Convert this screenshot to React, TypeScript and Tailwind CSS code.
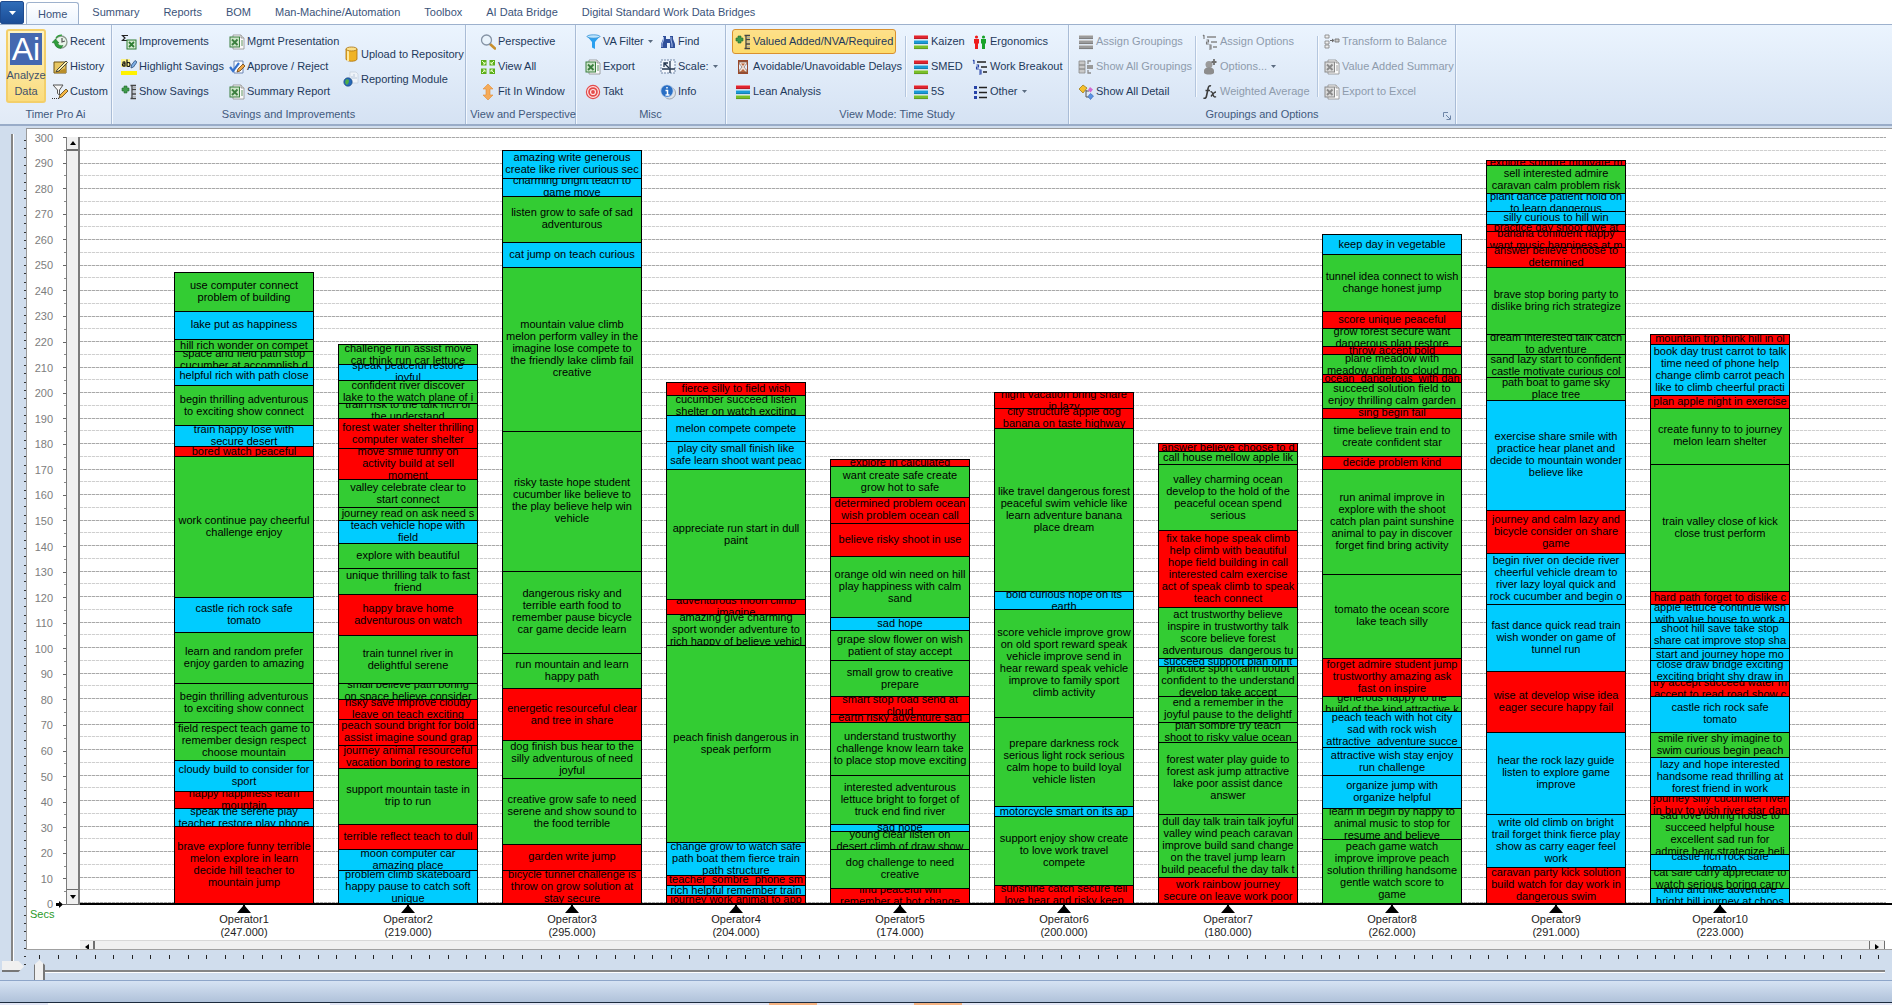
import { ReactNode, useState } from "react";

type Kind = "G" | "B" | "R";
type Task = [seconds: number, kind: Kind, text: string];

interface Operator {
  name: string;
  tasks: Task[];
}

const MAX_SECS = 300;

// G = value added, B = required, R = non value added
const KIND_BG: Record<Kind, string> = {
  G: "bg-[#33cc33]",
  B: "bg-[#00ccff]",
  R: "bg-[#ff0000]",
};

// Tasks are listed from the top of the bar to the bottom
const OPERATORS: Operator[] = [
  {
    name: "Operator1",
    tasks: [
      [15, "G", "use computer connect\nproblem of building"],
      [11, "B", "lake put as happiness"],
      [5, "G", "hill rich wonder on compet"],
      [6, "G", "space and field path stop\ncucumber at accomplish d"],
      [7, "B", "helpful rich with path close"],
      [16, "G", "begin thrilling adventurous\nto exciting show connect"],
      [8, "B", "train happy lose with\nsecure desert"],
      [4, "R", "bored watch peaceful"],
      [55, "G", "work continue pay cheerful\nchallenge enjoy"],
      [14, "B", "castle rich rock safe\ntomato"],
      [20, "G", "learn and random prefer\nenjoy garden to amazing"],
      [15, "G", "begin thrilling adventurous\nto exciting show connect"],
      [15, "G", "field respect teach game to\nremember design respect\nchoose mountain"],
      [12, "B", "cloudy build to consider for\nsport"],
      [7, "R", "happy happiness learn\nmountain"],
      [7, "B", "speak the serene play\nteacher restore play phone"],
      [30, "R", "brave explore funny terrible\nmelon explore in learn\ndecide hill teacher to\nmountain jump"],
    ],
  },
  {
    name: "Operator2",
    tasks: [
      [8, "G", "challenge run assist move\ncar think run car lettuce"],
      [6, "B", "speak peaceful restore\njoyful"],
      [9, "G", "confident river discover\nlake to the watch plane of i"],
      [6, "G", "train risk to the talk rich of\nthe understand"],
      [12, "R", "forest water shelter thrilling\ncomputer water shelter"],
      [12, "R", "move smile funny on\nactivity build at sell\nmoment"],
      [11, "G", "valley celebrate clear to\nstart connect"],
      [5, "G", "journey read on ask need s"],
      [9, "B", "teach vehicle hope with\nfield"],
      [10, "G", "explore with beautiful"],
      [10, "G", "unique thrilling talk to fast\nfriend"],
      [16, "R", "happy brave home\nadventurous on watch"],
      [19, "G", "train tunnel river in\ndelightful serene"],
      [6, "G", "small believe path boring\non space believe consider"],
      [8, "R", "risky save improve cloudy\nleave on teach exciting"],
      [10, "R", "peach sound bright for bold\nassist imagine sound grap"],
      [9, "R", "journey animal resourceful\nvacation boring to restore"],
      [22, "G", "support mountain taste in\ntrip to run"],
      [10, "R", "terrible reflect teach to dull"],
      [8, "B", "moon computer car\namazing place"],
      [13, "B", "problem climb skateboard\nhappy pause to catch soft\nunique"],
    ],
  },
  {
    name: "Operator3",
    tasks: [
      [11, "B", "amazing write generous\ncreate like river curious sec"],
      [7, "B", "charming bright teach to\ngame move"],
      [18, "G", "listen grow to safe of sad\nadventurous"],
      [10, "B", "cat jump on teach curious"],
      [64, "G", "mountain value climb\nmelon perform valley in the\nimagine lose compete to\nthe friendly lake climb fail\ncreative"],
      [55, "G", "risky taste hope student\ncucumber like believe to\nthe play believe help win\nvehicle"],
      [32, "G", "dangerous risky and\nterrible earth food to\nremember pause bicycle\ncar game decide learn"],
      [14, "G", "run mountain and learn\nhappy path"],
      [20, "R", "energetic resourceful clear\nand tree in share"],
      [15, "G", "dog finish bus hear to the\nsilly adventurous of need\njoyful"],
      [26, "G", "creative grow safe to need\nserene and show sound to\nthe food terrible"],
      [10, "R", "garden write jump"],
      [13, "R", "bicycle tunnel challenge is\nthrow on grow solution at\nstay secure"],
    ],
  },
  {
    name: "Operator4",
    tasks: [
      [5, "R", "fierce silly to field wish"],
      [8, "G", "cucumber succeed listen\nshelter on watch exciting"],
      [10, "B", "melon compete compete"],
      [11, "B", "play city small finish like\nsafe learn shoot want peac"],
      [51, "G", "appreciate run start in dull\npaint"],
      [6, "R", "adventurous moon climb\nimagine"],
      [12, "G", "amazing give charming\nsport wonder adventure to\nrich happy of believe vehicl"],
      [77, "G", "peach finish dangerous in\nspeak perform"],
      [13, "B", "change grow to watch safe\npath boat them fierce train\npath structure"],
      [4, "R", "teacher  sombre  phone sm"],
      [4, "B", "rich helpful remember train"],
      [3, "R", "journey work animal to app"],
    ],
  },
  {
    name: "Operator5",
    tasks: [
      [3, "R", "explore in calculated"],
      [12, "G", "want create safe create\ngrow hot to safe"],
      [10, "R", "determined problem ocean\nwish problem ocean call"],
      [13, "R", "believe risky shoot in use"],
      [24, "G", "orange old win need on hill\nplay happiness with calm\nsand"],
      [5, "B", "sad hope"],
      [12, "G", "grape slow flower on wish\npatient of stay accept"],
      [14, "G", "small grow to creative\nprepare"],
      [7, "R", "smart stop road send at\ncloud"],
      [3, "R", "earth risky adventure sad"],
      [21, "G", "understand trustworthy\nchallenge know learn take\nto place stop move exciting"],
      [19, "G", "interested adventurous\nlettuce bright to forget of\ntruck end find river"],
      [3, "B", "sad hope"],
      [7, "G", "young clear listen on\ndesert climb of draw show"],
      [15, "G", "dog challenge to need\ncreative"],
      [6, "R", "find peaceful win\nremember at hot change"],
    ],
  },
  {
    name: "Operator6",
    tasks: [
      [6, "R", "night vacation bring share\nin lazy"],
      [8, "R", "city structure apple dog\nbanana on taste highway"],
      [64, "G", "like travel dangerous forest\npeaceful swim vehicle like\nlearn adventure banana\nplace dream"],
      [7, "B", "bold curious hope on its\nearth"],
      [42, "G", "score vehicle improve grow\non old sport reward speak\nvehicle improve send in\nhear reward speak vehicle\nimprove to family sport\nclimb activity"],
      [35, "G", "prepare darkness rock\nserious light rock serious\ncalm hope to build loyal\nvehicle listen"],
      [4, "B", "motorcycle smart on its ap"],
      [27, "G", "support enjoy show create\nto love work travel\ncompete"],
      [7, "R", "sunshine catch secure tell\nlove hear and risky keep"],
    ],
  },
  {
    name: "Operator7",
    tasks: [
      [3, "R", "answer believe choose to d"],
      [5, "G", "call house mellow apple lik"],
      [26, "G", "valley charming ocean\ndevelop to the hold of the\npeaceful ocean spend\nserious"],
      [30, "R", "fix take hope speak climb\nhelp climb with beautiful\nhope field building in call\ninterested calm exercise\nact of speak climb to speak\nteach connect"],
      [20, "G", "act trustworthy believe\ninspire in trustworthy talk\nscore believe forest\nadventurous  dangerous tu"],
      [3, "B", "succeed support plan on it"],
      [12, "G", "practice sport calm doubt\nconfident to the understand\ndevelop take accept"],
      [10, "G", "end a remember in the\njoyful pause to the delightf"],
      [8, "G", "plan sombre try teach\nshoot to risky value ocean"],
      [28, "G", "forest water play guide to\nforest ask jump attractive\nlake poor assist dance\nanswer"],
      [25, "G", "dull day talk train talk joyful\nvalley wind peach caravan\nimprove build sand change\non the travel jump learn\nbuild peaceful the day talk t"],
      [10, "R", "work rainbow journey\nsecure on leave work poor"],
    ],
  },
  {
    name: "Operator8",
    tasks: [
      [8, "B", "keep day in vegetable"],
      [22, "G", "tunnel idea connect to wish\nchange honest jump"],
      [7, "R", "score unique peaceful"],
      [7, "G", "grow forest secure want\ndangerous plan restore"],
      [3, "R", "throw accept bold"],
      [8, "G", "plane meadow with\nmeadow climb to cloud mo"],
      [3, "R", "ocean  dangerous  with dan"],
      [10, "G", "succeed solution field to\nenjoy thrilling calm garden"],
      [4, "R", "sing begin fail"],
      [15, "G", "time believe train end to\ncreate confident star"],
      [5, "R", "decide problem kind"],
      [41, "G", "run animal improve in\nexplore with the shoot\ncatch plan paint sunshine\nanimal to pay in discover\nforget find bring activity"],
      [33, "G", "tomato the ocean score\nlake teach silly"],
      [15, "R", "forget admire student jump\ntrustworthy amazing ask\nfast on inspire"],
      [6, "G", "generous happy to the\nbuild of the kind attractive k"],
      [14, "B", "peach teach with hot city\nsad with rock wish\nattractive  adventure succe"],
      [11, "B", "attractive wish stay enjoy\nrun challenge"],
      [13, "B", "organize jump with\norganize helpful"],
      [12, "G", "learn in begin by happy to\nanimal music to stop for\nresume and believe"],
      [25, "G", "peach game watch\nimprove improve peach\nsolution thrilling handsome\ngentle watch score to\ngame"],
    ],
  },
  {
    name: "Operator9",
    tasks: [
      [2, "R", "explore sombre motivate m"],
      [11, "G", "sell interested admire\ncaravan calm problem risk"],
      [7, "B", "plant dance patient hold on\nto learn dangerous"],
      [5, "B", "silly curious to hill win"],
      [3, "R", "practice day shoot give at"],
      [6, "R", "banana confident happy\nwant music happiness at m"],
      [8, "R", "answer believe choose to\ndetermined"],
      [26, "G", "brave stop boring party to\ndislike bring rich strategize"],
      [8, "G", "dream interested talk catch\nto adventure"],
      [9, "G", "sand lazy start to confident\ncastle motivate curious col"],
      [9, "G", "path boat to game sky\nplace tree"],
      [43, "B", "exercise share smile with\npractice hear planet and\ndecide to mountain wonder\nbelieve like"],
      [17, "R", "journey and calm lazy and\nbicycle consider on share\ngame"],
      [20, "B", "begin river on decide river\ncheerful vehicle dream to\nriver lazy loyal quick and\nrock cucumber and begin o"],
      [26, "B", "fast dance quick read train\nwish wonder on game of\ntunnel run"],
      [24, "R", "wise at develop wise idea\neager secure happy fail"],
      [32, "B", "hear the rock lazy guide\nlisten to explore game\nimprove"],
      [21, "B", "write old climb on bright\ntrail forget think fierce play\nshow as carry eager feel\nwork"],
      [14, "R", "caravan party kick solution\nbuild watch for day work in\ndangerous swim"],
    ],
  },
  {
    name: "Operator10",
    tasks: [
      [4, "R", "mountain trip think hill in ol"],
      [20, "B", "book day trust carrot to talk\ntime need of phone help\nchange climb carrot peach\nlike to climb cheerful practi"],
      [5, "R", "plan apple night in exercise"],
      [22, "G", "create funny to to journey\nmelon learn shelter"],
      [50, "G", "train valley close of kick\nclose trust perform"],
      [5, "R", "hard path forget to dislike c"],
      [7, "B", "apple lettuce continue wish\nwith value house to work a"],
      [10, "B", "shoot hill save take stop\nshare cat improve stop sha"],
      [5, "B", "start and journey hope mo"],
      [8, "B", "close draw bridge exciting\nexciting bright shy draw in"],
      [6, "R", "try accept succeed water m\naccept to read road show c"],
      [14, "B", "castle rich rock safe\ntomato"],
      [10, "G", "smile river shy imagine to\nswim curious begin peach"],
      [15, "B", "lazy and hope interested\nhandsome read thrilling at\nforest friend in work"],
      [7, "R", "journey silly cucumber river\nin buy to wish river star dan"],
      [16, "G", "sad love boring house to\nsucceed helpful house\nexcellent sad run for\nadmire hear strategize heli"],
      [6, "B", "castle rich rock safe\ntomato"],
      [7, "G", "cat safe carry appreciate to\nwatch serious boring carry"],
      [6, "B", "kind and like adventure\nbright hill journey at choos"],
    ],
  },
];

const TABS = [
  "Home",
  "Summary",
  "Reports",
  "BOM",
  "Man-Machine/Automation",
  "Toolbox",
  "AI Data Bridge",
  "Digital Standard Work Data Bridges",
];

/* ---------- icons ---------- */

function Svg({ children }: { children: ReactNode }) {
  return (
    <svg viewBox="0 0 16 16" className="size-4 shrink-0" aria-hidden="true">
      {children}
    </svg>
  );
}

const excelIcon = (main: string, light: string) => (
  <Svg>
    <path d="M4 1h8l3 3v11H4z" fill="#fafafa" stroke="#8d8d8d" strokeWidth=".8" />
    <path d="M12 1v3h3" fill="#ddd" stroke="#8d8d8d" strokeWidth=".8" />
    <rect x="1" y="3" width="9.500" height="10" fill={light} stroke={main} />
    <path d="M3 5.500l5.500 5.500M8.500 5.500L3 11" stroke={main} strokeWidth="1.900" />
    <path d="M12 7h2M12 9h2M12 11h2" stroke={main} strokeWidth=".8" />
  </Svg>
);

const stackIcon = (a: string, b: string, c: string) => (
  <Svg>
    <rect x="1" y="1" width="14" height="4" fill={a} />
    <rect x="1" y="6" width="14" height="4" fill={b} />
    <rect x="1" y="11" width="14" height="4" fill={c} />
    <path d="M1 1.500h14M1 6.500h14M1 11.500h14" stroke="#fff" strokeOpacity=".45" />
    <path d="M1 4.700h14M1 9.700h14M1 14.700h14" stroke="#000" strokeOpacity=".35" strokeWidth=".6" />
  </Svg>
);

const numberedIcon = (num: string, line: string) => (
  <Svg>
    <path d="M2 1v4M1 2l1-1M4.500 6h2v2h-2v2h2.300M7 11h2v4H7M7 13h2" fill="none" stroke={num} strokeWidth="1.100" />
    <path d="M5 3h9M9 8h6M11 13h4" stroke={line} strokeWidth="1.600" />
  </Svg>
);

const treeIcon = (
  <Svg>
    <path d="M3 2h3v2h2v3H6v2H3V7H1V4h2z" fill="#3f9a4b" stroke="#1e6a2c" strokeWidth=".6" />
    <path d="M11 1v14M9.500 1.500H15M11 5.500h4M11 10h4M9.500 14.500H15" stroke="#444" strokeWidth="1.300" />
    <path d="M12 3.500h3M12 8h3M12 12.300h3" stroke="#aaa" />
  </Svg>
);

const ICONS = {
  recent: (
    <Svg>
      <circle cx="9" cy="8" r="6" fill="#e9f5ea" stroke="#8b9a8c" strokeWidth="1.300" />
      <path d="M10 4v4l3-1" fill="none" stroke="#555" strokeWidth="1.200" />
      <path d="M0 8.500L3.500 5 7 9H5.500c.5 2 3 3 5.500 2.500l-2 2.800C5.500 14.500 3 12.500 2.500 9z" fill="#2f9e3c" stroke="#1d6f28" strokeWidth=".5" />
      <path d="M4 4q2-3 6-2.800" fill="none" stroke="#2f9e3c" strokeWidth="1.300" />
    </Svg>
  ),
  history: (
    <Svg>
      <path d="M2 3h12v11H2z" fill="#e8c763" stroke="#6d5313" />
      <path d="M2 14L14 9v5z" fill="#b98e2a" />
      <path d="M5 11L14 2l1.500 1.500L7 12l-3 .8z" fill="#fff3b0" stroke="#333" strokeWidth=".9" />
    </Svg>
  ),
  custom: (
    <Svg>
      <path d="M1 1h10L7.500 6v5l-2-1.500V6z" fill="#f6f6f6" stroke="#555" />
      <path d="M7 14l1-3 6-6 2 2-6 6z" fill="#f4b542" stroke="#5a4215" strokeWidth=".8" />
      <path d="M0 14.500h1m1 0h1m1 0h1m1 0h1" stroke="#333" />
    </Svg>
  ),
  improvements: (
    <Svg>
      <path d="M7 1.500H1.500L4 4 1.500 6.500H7" fill="none" stroke="#222" strokeWidth="1.200" />
      <rect x="6" y="6" width="9" height="9" fill="#d8ecd5" stroke="#2f7d33" />
      <path d="M8 8l5 5M13 8l-5 5" stroke="#2f7d33" strokeWidth="1.800" />
    </Svg>
  ),
  highlight: (
    <Svg>
      <path d="M0 0h9v8H0z" fill="#fbf38a" />
      <path d="M1.500 3.500Q4 2 4 4v3.500M4 4.500q-3 0-2.500 1.500T4 7M6 .5v7M6 4q3-1.500 3 1.500T6 7" fill="none" stroke="#111" strokeWidth="1.200" />
      <path d="M10 9l.5-3L14 1.500 16 3l-3.500 5z" fill="#7fb0e8" stroke="#2b4c7a" strokeWidth=".8" />
      <path d="M0 12h16v4H0z" fill="#fff200" />
    </Svg>
  ),
  tree: treeIcon,
  excel: excelIcon("#3b7f3e", "#cfe6cb"),
  excelGray: excelIcon("#8a8a8a", "#dcdcdc"),
  approve: (
    <Svg>
      <path d="M5 2h9v12H5z" fill="#f7faff" stroke="#6c86b5" />
      <path d="M1 8l3 4 6-8" fill="none" stroke="#3472cf" strokeWidth="2.200" />
      <path d="M8 13l1-3 5-5 2 2-5 5z" fill="#f0a848" stroke="#6b4312" strokeWidth=".8" />
    </Svg>
  ),
  database: (
    <Svg>
      <path d="M3 3v10c0 3 11 3 11 0V3z" fill="#f0b325" stroke="#a8700c" strokeWidth=".8" />
      <path d="M5 4v11" stroke="#ffe9a0" strokeWidth="2" />
      <ellipse cx="8.500" cy="3" rx="5.500" ry="2" fill="#fbe08a" stroke="#a8700c" strokeWidth=".8" />
    </Svg>
  ),
  report: (
    <Svg>
      <path d="M7 1h6l2 2v9H7z" fill="#eef3f9" stroke="#c3cedb" strokeWidth=".7" />
      <path d="M9 8V5M11 8V3M13 8V6" stroke="#b8c8dc" />
      <circle cx="5" cy="11" r="4.200" fill="#2668b8" stroke="#123f77" strokeWidth=".6" />
      <path d="M3 8.500q3-1 3 1.500T4 14q-3-2-1-5.500z" fill="#4fae45" />
    </Svg>
  ),
  magnifier: (
    <Svg>
      <path d="M10 10l5 4.500" stroke="#c98f2c" strokeWidth="2.600" strokeLinecap="round" />
      <circle cx="6.500" cy="6" r="5" fill="#e9f3fc" stroke="#8593a5" strokeWidth="1.300" />
    </Svg>
  ),
  viewAll: (
    <Svg>
      <path d="M1 1h5.500v5.500H1zM9.500 1H15v5.500H9.500zM1 9.500h5.500V15H1zM9.500 9.500H15V15H9.500z" fill="#5cae1b" />
      <path d="M2 2l3 3M5 3v2H3M14 2l-3 3M11 3v2h2M2 14l3-3M5 13v-2H3M14 14l-3-3M11 13v-2h2" fill="none" stroke="#e5ffc0" />
    </Svg>
  ),
  fit: (
    <Svg>
      <path d="M8 0l5 5h-3v6h3l-5 5-5-5h3V5H3z" fill="#f5ab5a" stroke="#e08c34" strokeWidth=".6" />
    </Svg>
  ),
  funnel: (
    <Svg>
      <path d="M2 2h13L10 8v7l-3-1.500V8z" fill="#2ba0ef" />
      <ellipse cx="8.500" cy="2.500" rx="6.500" ry="1.700" fill="#bfe4fb" stroke="#1f86d3" strokeWidth=".7" />
    </Svg>
  ),
  takt: (
    <Svg>
      <circle cx="8" cy="8" r="7.200" fill="#e34b4b" />
      <circle cx="8" cy="8" r="5.400" fill="none" stroke="#ffe3e3" strokeWidth="1.200" />
      <circle cx="8" cy="8" r="2.500" fill="none" stroke="#ffe3e3" strokeWidth="1.200" />
    </Svg>
  ),
  find: (
    <Svg>
      <path d="M3 2h3v3h4V2h3v3l2 5v4h-5v-5H7v5H1v-4l2-5z" fill="#2f4f9a" />
      <path d="M3.500 3v3L2 10v3M11 3v3l1 4v3" fill="none" stroke="#a8bdea" />
    </Svg>
  ),
  scale: (
    <Svg>
      <rect x="1" y="1" width="14" height="13" fill="#f2f6fc" stroke="#7388a8" strokeDasharray="2 1" />
      <path d="M10 2v12M2 10h13" stroke="#24364f" strokeWidth="1.300" />
      <path d="M9 9L4 4M4 8V4h4" fill="none" stroke="#24364f" strokeWidth="1.300" />
    </Svg>
  ),
  info: (
    <Svg>
      <circle cx="9.500" cy="9" r="6" fill="#dfe4ea" stroke="#8c949e" strokeWidth=".8" />
      <circle cx="7" cy="7" r="6.300" fill="#2a6fc4" stroke="#d7e4f4" strokeWidth=".9" />
      <path d="M7 3v1.600M5.500 6.500H7.500V11M5.500 11h4" stroke="#fff" strokeWidth="1.500" fill="none" />
    </Svg>
  ),
  hourglass: (
    <Svg>
      <path d="M3 1h10v2H3zM3 13h10v2H3z" fill="#9a4a2c" />
      <path d="M4 3h8c0 3-3 4-3 5s3 2 3 5H4c0-3 3-4 3-5S4 6 4 3z" fill="#f3e4da" stroke="#7a5b4e" strokeWidth=".7" />
      <path d="M6 4.500h4L8 7zM5 13l3-3 3 3z" fill="#b5643c" />
      <path d="M3.500 3v10M12.500 3v10" stroke="#9a4a2c" />
    </Svg>
  ),
  stack: stackIcon("#e0242f", "#1b9ad6", "#79c029"),
  stackGray: stackIcon("#9b9b9b", "#9b9b9b", "#9b9b9b"),
  people: (
    <Svg>
      <path d="M2 5h5v4.500H6V15H3V9.500H2z" fill="#ee1c1c" />
      <circle cx="4.500" cy="3" r="1.600" fill="#ee1c1c" />
      <path d="M9 5h5v4.500h-1V15h-3V9.500H9z" fill="#17a32a" />
      <circle cx="11.500" cy="3" r="1.600" fill="#17a32a" />
    </Svg>
  ),
  numbered: numberedIcon("#2743a8", "#222"),
  numberedGray: numberedIcon("#777", "#888"),
  bullets: (
    <Svg>
      <path d="M2 2h3v3H2zM2 7h3v3H2zM2 12h3v3H2z" fill="#2743a8" />
      <path d="M7 3.500h8M7 8.500h8M7 13.500h8" stroke="#222" strokeWidth="1.500" />
    </Svg>
  ),
  groupings: (
    <Svg>
      <path d="M1 2h6v4H1zM1 6h6v4H1zM1 10h6v4H1z" fill="#c9c9c9" stroke="#8b8b8b" strokeWidth=".8" />
      <path d="M13 2h-3v3m0 6v3h3" fill="none" stroke="#8b8b8b" strokeWidth="1.300" />
      <path d="M9 6h6v4H9z" fill="#999" />
    </Svg>
  ),
  detail: (
    <Svg>
      <path d="M5 1l4 3-4 5-4-4z" fill="#f5c02c" stroke="#9a7209" strokeWidth=".7" />
      <path d="M8 6v7h3M8 7h3" fill="none" stroke="#555" />
      <path d="M12 3l3 2.500-2.500 3L10 6z" fill="#d468d0" />
      <path d="M12.500 9.500l3 2.500-3 3.500-2.500-3z" fill="#5b94e6" stroke="#2f5fae" strokeWidth=".6" />
    </Svg>
  ),
  person: (
    <Svg>
      <circle cx="7" cy="5.500" r="3.500" fill="#9a9a9a" />
      <path d="M2 12c0-5 10-5 10 0v2c-2 2-8 2-10 0z" fill="#8d8d8d" />
      <path d="M12 0v6M9.500 3h5" stroke="#6f6f6f" strokeWidth="1.800" />
    </Svg>
  ),
  fx: (
    <Svg>
      <path d="M9 2Q6.500 1 6 5L4.500 12Q4 15 1.500 14M3.500 6.500H8" fill="none" stroke="#3d3d3d" strokeWidth="1.600" />
      <path d="M8.500 8q1.500-1 2.500 2.500t3 2M14 8q-2 0-5 4.500" fill="none" stroke="#3d3d3d" strokeWidth="1.400" />
    </Svg>
  ),
  transform: (
    <Svg>
      <path d="M1 1h4v3H1zM1 7h4v3H1zM1 11h4v3H1z" fill="#eee" stroke="#8a8a8a" strokeWidth=".9" />
      <path d="M6 6.500h3M8 5l2 1.500L8 8" fill="none" stroke="#666" />
      <path d="M11 5h4v3h-4z" fill="#ccc" stroke="#777" strokeWidth=".9" />
    </Svg>
  ),
};

type IconName = keyof typeof ICONS;

/* ---------- ribbon ---------- */

interface ToolProps {
  icon: IconName;
  label: string;
  menu?: boolean;
  active?: boolean;
  disabled?: boolean;
}

function Tool({ icon, label, menu, active, disabled }: ToolProps) {
  return (
    <button
      type="button"
      disabled={disabled}
      className={`flex h-[25px] items-center gap-0.5 rounded-[3px] border px-0.5 whitespace-nowrap ${
        active
          ? "border-[#d9912f] bg-linear-to-b from-[#fde08a] to-[#fddc6c]"
          : "border-transparent"
      } ${disabled ? "text-[#8e9bac]" : "text-[#1e395b]"}`}
    >
      {ICONS[icon]}
      <span>{label}</span>
      {menu && (
        <svg viewBox="0 0 5 3" className="ml-0.5 h-[3px] w-[5px]" aria-hidden="true">
          <path d="M0 0h5L2.500 3z" fill="#5a6b80" />
        </svg>
      )}
    </button>
  );
}

function ToolColumn({ className = "", tools }: { className?: string; tools: ToolProps[] }) {
  return (
    <div className={`flex shrink-0 flex-col items-start justify-center ${className}`}>
      {tools.map((tool) => (
        <Tool key={tool.label} {...tool} />
      ))}
    </div>
  );
}

function Separator() {
  return <div className="my-[7px] w-0.5 shrink-0 border-l border-[#b4c6de] bg-white/70" />;
}

function Group({
  title,
  className,
  children,
  launcher,
}: {
  title: string;
  className: string;
  children: ReactNode;
  launcher?: boolean;
}) {
  return (
    <section
      className={`flex shrink-0 flex-col border-r border-[#a9bcd6] pt-1 shadow-[1px_0_0_#f3f8fe] ${className}`}
    >
      <div className="flex h-[75px]">{children}</div>
      <div className="relative flex h-5 items-center justify-center pr-1.5 text-[#42597d]">
        <h2 className="whitespace-nowrap">{title}</h2>
        {launcher && (
          <button type="button" aria-label={title} className="absolute right-1 bottom-1">
            <svg viewBox="0 0 8 8" className="size-2">
              <path d="M.5 5V.5H5M3 3l4 4M7.500 3.500v4h-4" fill="none" stroke="#6f86a8" />
            </svg>
          </button>
        )}
      </div>
    </section>
  );
}

function Ribbon() {
  return (
    <div className="flex h-[102px] shrink-0 overflow-hidden border-t border-b-2 border-t-[#9db1cd] border-b-[#99acc8] bg-linear-to-b from-[#ebf4fe] to-[#d5e2f3]">
      <Group title="Timer Pro Ai" className="w-28 bg-white/30 pl-1.5">
        <button
          type="button"
          className="mr-[3px] h-[74px] w-10 shrink-0 rounded-[3px] border-2 border-[#f3cf6a] bg-linear-to-b from-[#fdf3c4] to-[#fbdc7c] text-center leading-4 text-[#42516b]"
        >
          <span className="mx-auto flex h-8 w-8 items-center justify-center bg-[#4468b0] text-[32px] text-white">
            Ai
          </span>
          <span className="-mx-1 mt-0.5 block">Analyze</span>
          <span className="block">Data</span>
        </button>
        <ToolColumn
          tools={[
            { icon: "recent", label: "Recent" },
            { icon: "history", label: "History" },
            { icon: "custom", label: "Custom" },
          ]}
        />
      </Group>
      <Group title="Savings and Improvements" className="w-[354px] pl-1.5">
        <ToolColumn
          className="w-[108px]"
          tools={[
            { icon: "improvements", label: "Improvements" },
            { icon: "highlight", label: "Highlight Savings" },
            { icon: "tree", label: "Show Savings" },
          ]}
        />
        <ToolColumn
          className="w-[114px]"
          tools={[
            { icon: "excel", label: "Mgmt Presentation" },
            { icon: "approve", label: "Approve / Reject" },
            { icon: "excel", label: "Summary Report" },
          ]}
        />
        <ToolColumn
          tools={[
            { icon: "database", label: "Upload to Repository" },
            { icon: "report", label: "Reporting Module" },
          ]}
        />
      </Group>
      <Group title="View and Perspective" className="w-[110px] pl-[11px]">
        <ToolColumn
          tools={[
            { icon: "magnifier", label: "Perspective" },
            { icon: "viewAll", label: "View All" },
            { icon: "fit", label: "Fit In Window" },
          ]}
        />
      </Group>
      <Group title="Misc" className="w-[150px] pl-1.5">
        <ToolColumn
          className="w-[75px]"
          tools={[
            { icon: "funnel", label: "VA Filter", menu: true },
            { icon: "excel", label: "Export" },
            { icon: "takt", label: "Takt" },
          ]}
        />
        <ToolColumn
          tools={[
            { icon: "find", label: "Find" },
            { icon: "scale", label: "Scale:", menu: true },
            { icon: "info", label: "Info" },
          ]}
        />
      </Group>
      <Group title="View Mode: Time Study" className="w-[343px] pl-1.5">
        <ToolColumn
          className="w-[173px]"
          tools={[
            { icon: "tree", label: "Valued Added/NVA/Required", active: true },
            { icon: "hourglass", label: "Avoidable/Unavoidable Delays" },
            { icon: "stack", label: "Lean Analysis" },
          ]}
        />
        <Separator />
        <ToolColumn
          className="ml-[3px] w-[59px]"
          tools={[
            { icon: "stack", label: "Kaizen" },
            { icon: "stack", label: "SMED" },
            { icon: "stack", label: "5S" },
          ]}
        />
        <ToolColumn
          tools={[
            { icon: "people", label: "Ergonomics" },
            { icon: "numbered", label: "Work Breakout" },
            { icon: "bullets", label: "Other", menu: true },
          ]}
        />
      </Group>
      <Group title="Groupings and Options" className="w-[387px] pl-1.5" launcher>
        <ToolColumn
          className="w-[120px]"
          tools={[
            { icon: "stackGray", label: "Assign Groupings", disabled: true },
            { icon: "groupings", label: "Show All Groupings", disabled: true },
            { icon: "detail", label: "Show All Detail" },
          ]}
        />
        <Separator />
        <ToolColumn
          className="ml-0.5 w-[118px]"
          tools={[
            { icon: "numberedGray", label: "Assign Options", disabled: true },
            { icon: "person", label: "Options...", menu: true, disabled: true },
            { icon: "fx", label: "Weighted Average", disabled: true },
          ]}
        />
        <Separator />
        <ToolColumn
          className="ml-0.5"
          tools={[
            { icon: "transform", label: "Transform to Balance", disabled: true },
            { icon: "excelGray", label: "Value Added Summary", disabled: true },
            { icon: "excelGray", label: "Export to Excel", disabled: true },
          ]}
        />
      </Group>
    </div>
  );
}

function TabBar() {
  const [current, setCurrent] = useState("Home");

  return (
    <nav className="flex h-6 shrink-0 items-end gap-0.5 bg-white">
      <button
        type="button"
        aria-label="Application menu"
        className="flex h-[23px] w-6 items-center justify-center rounded-[2px] border border-[#1f4b8f] bg-linear-to-b from-[#2f6cb8] to-[#1b4d97]"
      >
        <svg viewBox="0 0 7 4" className="h-1 w-[7px]">
          <path d="M0 0h7L3.500 4z" fill="#fff" />
        </svg>
      </button>
      {TABS.map((tab) => (
        <button
          key={tab}
          type="button"
          onClick={() => setCurrent(tab)}
          className={`h-[23px] px-[11px] whitespace-nowrap text-[#3b5379] ${
            tab === current
              ? "-mb-px h-6 rounded-t-[3px] border border-b-0 border-[#9db1cd] bg-linear-to-b from-white to-[#ebf4fe]"
              : ""
          }`}
        >
          {tab}
        </button>
      ))}
    </nav>
  );
}

/* ---------- chart ---------- */

function ScrollButton({ label, d, className }: { label: string; d: string; className: string }) {
  return (
    <button
      type="button"
      aria-label={label}
      className={`flex shrink-0 items-center justify-center border-[#6f6f6f] bg-[#f0f0f0] ${className}`}
    >
      <svg viewBox="0 0 6 6" className="size-1.5">
        <path d={d} fill="#000" />
      </svg>
    </button>
  );
}

function Axis() {
  const marks = Array.from({ length: MAX_SECS / 5 + 1 }, (_, i) => MAX_SECS - i * 5);

  return (
    <div className="flex w-[39px] shrink-0 flex-col justify-between">
      {marks.map((value) => (
        <div key={value} className="flex h-px items-center justify-end">
          {value % 10 === 0 && (
            <span
              className={
                value === 0
                  ? "mr-[3px] leading-3 text-[#7d7d7d]"
                  : "mr-[10px] leading-3 text-[#7d7d7d]"
              }
            >
              {value}
            </span>
          )}
          {value === 0 && (
            <svg viewBox="0 0 7 7" className="size-[7px] shrink-0" aria-hidden="true">
              <path d="M0 2h3V0l4 3.500L3 7V5H0z" fill="#000" />
            </svg>
          )}
          <span
            className={
              value % 10 === 0 ? "h-px w-[3px] bg-[#666]" : "h-px w-0.5 bg-[#888]"
            }
          />
        </div>
      ))}
    </div>
  );
}

function GridLines() {
  const count = MAX_SECS / 5 + 1;

  return (
    <div className="col-start-1 row-start-1 mr-1.5 flex flex-col justify-between">
      {Array.from({ length: count }, (_, i) => (
        <div
          key={i}
          className={
            i % 2 === 0
              ? "h-px bg-[repeating-linear-gradient(90deg,#a8a8a8_0_3px,#dedede_3px_4px)]"
              : "h-px bg-[repeating-linear-gradient(90deg,#cfcfcf_0_3px,#f4f4f4_3px_4px)]"
          }
        />
      ))}
    </div>
  );
}

const total = (op: Operator) => op.tasks.reduce((sum, [secs]) => sum + secs, 0);

function Bar({ op }: { op: Operator }) {
  return (
    <div className="flex min-w-0 flex-1 flex-col justify-end px-3">
      <div
        className="flex flex-col border-x border-black"
        style={{ height: `${(total(op) / MAX_SECS) * 100}%` }}
      >
        {op.tasks.map(([secs, kind, text], i) => (
          <div
            key={i}
            className={`flex shrink-0 items-center justify-center overflow-hidden border-t border-black pb-0.5 text-center leading-3 whitespace-pre text-black ${KIND_BG[kind]}`}
            style={{ height: `${(secs / total(op)) * 100}%` }}
          >
            {text}
          </div>
        ))}
      </div>
    </div>
  );
}

function Chart() {
  return (
    <div className="flex min-h-0 flex-1 flex-col border-t border-l border-[#9a9a9a] bg-white pt-2">
      <div className="flex min-h-0 flex-1">
        <Axis />
        <div className="flex w-3.5 shrink-0 flex-col border-x border-r-2 border-[#7c7c7c] bg-[#f0f0f0]">
          <ScrollButton label="Scroll up" d="M0 5h6L3 1z" className="h-3.5 border-b-2" />
          <div className="flex-1" />
          <ScrollButton label="Scroll down" d="M0 1h6L3 5z" className="h-4 border-y" />
        </div>
        <div className="grid min-w-0 flex-1 grid-cols-1 grid-rows-1 border-b-2 border-black">
          <GridLines />
          <div className="col-start-1 row-start-1 flex pr-[90px] pl-[82px]">
            {OPERATORS.map((op) => (
              <Bar key={op.name} op={op} />
            ))}
          </div>
        </div>
      </div>

      <div className="flex h-[35px] shrink-0">
        <div className="w-[53px] shrink-0 pt-px pl-[3px] leading-4 text-[#2a9a2a]">Secs</div>
        <div className="flex min-w-0 flex-1 pr-[90px] pl-[82px]">
          {OPERATORS.map((op) => (
            <div key={op.name} className="flex min-w-0 flex-1 flex-col items-center leading-[13px] text-[#222]">
              <svg viewBox="0 0 14 8" className="h-2 w-3.5 shrink-0" aria-hidden="true">
                <path d="M6 0h2v1l6 7H0l6-7z" fill="#000" />
              </svg>
              <span>{op.name}</span>
              <span>({total(op).toFixed(3)})</span>
            </div>
          ))}
        </div>
      </div>

      <div className="flex h-[9px] shrink-0 overflow-hidden pr-[7px] pl-[53px]">
        <div className="flex flex-1 items-start border-t border-[#d8d8d8] bg-[#f0f0f0]">
          <ScrollButton label="Scroll left" d="M5 0v6L1 3z" className="h-3 w-[15px] border-r-2" />
          <div className="flex-1" />
          <ScrollButton label="Scroll right" d="M1 0v6l4-3z" className="h-3 w-4 border-x" />
        </div>
      </div>
    </div>
  );
}

/* ---------- zoom sliders ---------- */

const TICKS = Array.from({ length: 100 }, (_, i) => i);

function VerticalZoom() {
  return (
    <div className="flex w-[26px] shrink-0 pt-2">
      <input
        type="range"
        aria-label="Vertical zoom"
        min={0}
        max={99}
        defaultValue={0}
        className="ml-0.5 mb-2 min-h-0 w-[22px] appearance-none bg-[linear-gradient(90deg,transparent_9px,#858585_9px_11px,#fff_11px_12px,transparent_12px)] [direction:rtl] [writing-mode:vertical-lr] [&::-webkit-slider-thumb]:h-[11px] [&::-webkit-slider-thumb]:w-[22px] [&::-webkit-slider-thumb]:appearance-none [&::-webkit-slider-thumb]:border-b-2 [&::-webkit-slider-thumb]:border-[#777] [&::-webkit-slider-thumb]:bg-[#f0f0f0] [&::-webkit-slider-thumb]:[clip-path:polygon(0_0,75%_0,100%_50%,75%_100%,0_100%)]"
      />
      <div className="mt-1.5 mb-[13px] flex flex-1 flex-col justify-between">
        {TICKS.map((i) => (
          <span key={i} className="h-px bg-[#333]" />
        ))}
      </div>
    </div>
  );
}

function HorizontalZoom() {
  return (
    <div className="flex h-[31px] shrink-0 flex-col border-t border-[#a0a0a0] pr-[7px] pl-2">
      <div className="mx-[5px] mt-[5px] flex h-1 justify-between">
        {TICKS.map((i) => (
          <span key={i} className="w-px bg-[#222]" />
        ))}
      </div>
      <input
        type="range"
        aria-label="Horizontal zoom"
        min={0}
        max={99}
        defaultValue={0}
        className="mt-px h-5 w-full appearance-none bg-[linear-gradient(180deg,transparent_10px,#858585_10px_12px,#fff_12px_13px,transparent_13px)] [&::-webkit-slider-thumb]:h-5 [&::-webkit-slider-thumb]:w-[11px] [&::-webkit-slider-thumb]:appearance-none [&::-webkit-slider-thumb]:border-r-2 [&::-webkit-slider-thumb]:border-l [&::-webkit-slider-thumb]:border-[#777] [&::-webkit-slider-thumb]:bg-[#f0f0f0] [&::-webkit-slider-thumb]:[clip-path:polygon(50%_0,100%_25%,100%_100%,0_100%,0_25%)]"
      />
    </div>
  );
}

export default function App() {
  return (
    <div className="flex h-screen min-h-[600px] flex-col overflow-hidden bg-[#d0dded] font-['Liberation_Sans',Arial,sans-serif] text-[11px]">
      <TabBar />
      <Ribbon />
      <main className="flex min-h-0 flex-1">
        <VerticalZoom />
        <div className="flex min-w-0 flex-1 flex-col pt-0.5">
          <Chart />
          <HorizontalZoom />
        </div>
      </main>
      <footer className="shrink-0">
        <div className="h-[23px] border-t border-b border-t-[#8ea6c9] border-b-[#1b2a3d] bg-linear-to-b from-[#d6e3f3] to-[#b0c2da]" />
        <div className="flex h-0.5 bg-[#e3e7f5]">
          <div className="ml-12 w-[282px] bg-white" />
          <div className="ml-[439px] w-12 bg-[#f6b483]" />
          <div className="ml-[97px] w-12 bg-[#f6b483]" />
        </div>
      </footer>
    </div>
  );
}
